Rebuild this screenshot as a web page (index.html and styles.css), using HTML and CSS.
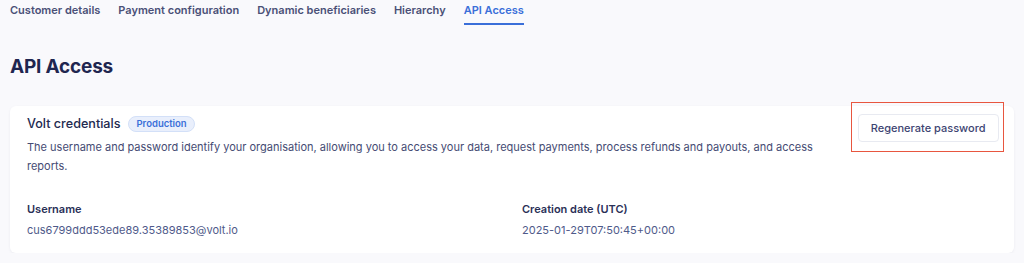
FILE: index.html
```html
<!DOCTYPE html>
<html lang="en">
<head>
    <meta charset="UTF-8">
    <meta name="viewport" content="width=device-width, initial-scale=1.0">
    <title>API Access</title>
    <link rel="stylesheet" href="styles.css">
</head>
<body>
    <div class="tabs">
        <a class="tab">Customer details</a>
        <a class="tab">Payment configuration</a>
        <a class="tab">Dynamic beneficiaries</a>
        <a class="tab">Hierarchy</a>
        <a class="tab active">API Access</a>
    </div>
    <h1 class="page-title">API Access</h1>
    <div class="card">
        <div class="card-head">
            <div class="card-info">
                <div class="card-title">
                    <h2>Volt credentials</h2>
                    <span class="badge">Production</span>
                </div>
                <p>The username and password identify your organisation, allowing you to access your data, request payments, process refunds and payouts, and access reports.</p>
            </div>
            <div class="highlight">
                <button class="btn">Regenerate password</button>
            </div>
        </div>
        <div class="fields">
            <div class="field">
                <div class="label">Username</div>
                <div class="value">cus6799ddd53ede89.35389853@volt.io</div>
            </div>
            <div class="field">
                <div class="label">Creation date (UTC)</div>
                <div class="value">2025-01-29T07:50:45+00:00</div>
            </div>
        </div>
    </div>
</body>
</html>
```

FILE: styles.css
```css
body {
    font-family: 'Inter', 'Noto Sans', sans-serif;
    margin: 0;
    padding: 0 10px;
    background-color: #f9f9fc;
    color: #2a3057;
}
.tabs {
    display: flex;
    gap: 18px;
    padding-top: 3px;
}
.tab {
    font-size: 11px;
    font-weight: 600;
    line-height: 15px;
    color: #4a5077;
    padding-bottom: 5px;
    border-bottom: 2px solid transparent;
}
.tab.active {
    color: #3b6fd9;
    border-bottom-color: #3b6fd9;
}
.page-title {
    font-size: 19px;
    font-weight: 700;
    color: #1f2650;
    margin: 30px 0 0;
    line-height: 24px;
    letter-spacing: -0.2px;
}
.card {
    background: #fff;
    border-radius: 6px;
    box-shadow: 0 1px 3px rgba(30, 40, 90, 0.06);
    margin-top: 27px;
    padding: 9px 17px 15px;
}
.card-head {
    display: flex;
    justify-content: space-between;
    align-items: flex-start;
}
.card-info {
    max-width: 800px;
}
.card-title {
    display: flex;
    align-items: center;
    gap: 8px;
    height: 17px;
}
.card-title h2 {
    font-size: 12.6px;
    font-weight: 500;
    margin: 0;
    color: #22294f;
}
.badge {
    font-size: 9.5px;
    font-weight: 600;
    line-height: 14px;
    color: #3b6fd9;
    background: #e9effc;
    border: 1px solid #d3e0f8;
    border-radius: 8px;
    padding: 0 7px;
}
.card-info p {
    font-size: 11px;
    line-height: 19px;
    color: #454b73;
    margin: 5.5px 0 0;
}
.highlight {
    margin: -13px -7px 0 0;
    padding: 10.5px 4.5px 9.5px 5.5px;
    border: 1.5px solid #e8563f;
}
.btn {
    display: block;
    font-family: inherit;
    font-size: 11px;
    font-weight: 500;
    line-height: 14px;
    color: #3d4472;
    background: #fff;
    border: 1px solid #e8eaf1;
    border-radius: 4px;
    padding: 6px 12px;
    cursor: pointer;
}
.fields {
    display: grid;
    grid-template-columns: 1fr 1fr;
    gap: 20px;
    margin-top: 25.5px;
}
.label {
    font-size: 11px;
    font-weight: 600;
    line-height: 16px;
    color: #2a3057;
}
.value {
    font-size: 11px;
    line-height: 16px;
    color: #4f5a8a;
    margin-top: 5px;
}
```
